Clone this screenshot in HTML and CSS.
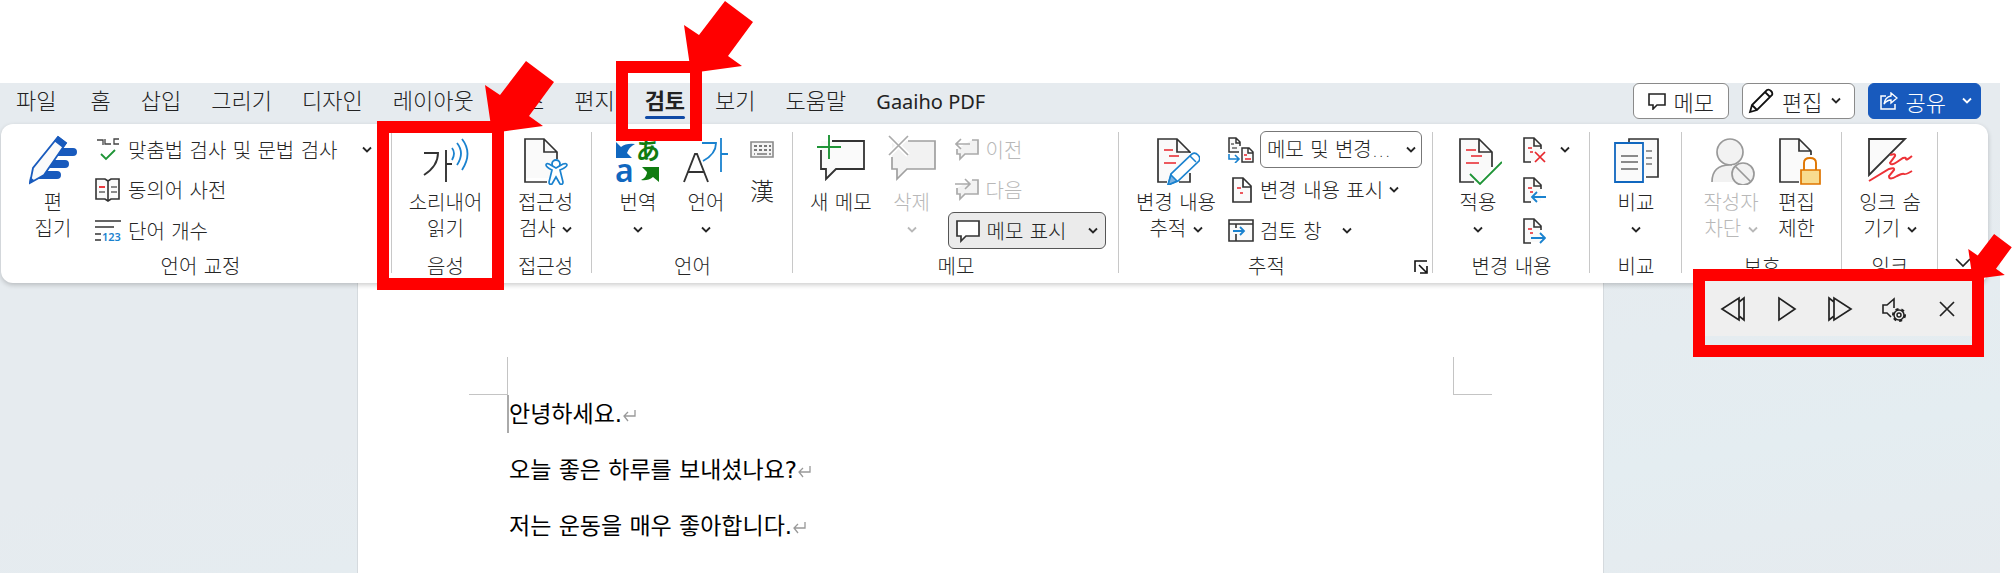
FILE: index.html
```html
<!DOCTYPE html>
<html lang="ko">
<head>
    <meta charset="UTF-8">
    <meta name="viewport" content="width=device-width, initial-scale=1.0">
    <title>검토 - 소리내어 읽기</title>
    <link rel="stylesheet" href="styles.css">
</head>
<body>

<svg class="sprite" aria-hidden="true">
    <symbol id="chevron" viewBox="0 0 10 8">
        <path d="M1 1.5 5 5.5 9 1.5" fill="none" stroke="currentColor" stroke-width="1.8"/>
    </symbol>
    <symbol id="arrow" viewBox="0 0 69 73">
        <path d="M41 0 69 21 44 55 58 65 7 72 0 24 15 34Z" fill="#f00"/>
    </symbol>
    <symbol id="page-small" viewBox="0 0 24 28">
        <path d="M2 2h10l7 7v16H2z" fill="#fafafa"/>
        <path d="M9 26H2V2h10l7 7v4M12 2v8h7" fill="none" stroke="#333" stroke-width="1.6"/>
        <path d="M6 12h4M8 16h3" stroke="#e8252b" stroke-width="1.6"/>
    </symbol>
</svg>

<div class="app">
    <header class="topbar">
        <nav class="tabs">
            <a class="tab tab-file" href="#">파일</a>
            <a class="tab" href="#">홈</a>
            <a class="tab" href="#">삽입</a>
            <a class="tab" href="#">그리기</a>
            <a class="tab" href="#">디자인</a>
            <a class="tab" href="#">레이아웃</a>
            <a class="tab" href="#">참조</a>
            <a class="tab" href="#">편지</a>
            <a class="tab active" href="#">검토
                <span class="mark mark-tab"><svg class="arrow"><use href="#arrow"/></svg></span>
            </a>
            <a class="tab" href="#">보기</a>
            <a class="tab" href="#">도움말</a>
            <a class="tab tab-latin" href="#">Gaaiho PDF</a>
        </nav>
        <div class="actions">
            <button class="action">
                <svg width="18" height="18" viewBox="0 0 18 18"><path d="M1 2h16v11H9l-4 4v-4H1z" fill="none" stroke="#222" stroke-width="1.6"/></svg>
                메모
            </button>
            <button class="action">
                <svg width="26" height="26" viewBox="0 0 26 26"><path d="M2 24 4 17 19 2q2-1 4 1t1 4L9 22zM4 17l5 5M17 4l5 5" fill="none" stroke="#111" stroke-width="1.8"/></svg>
                편집
                <svg class="chevron"><use href="#chevron"/></svg>
            </button>
            <button class="action share">
                <svg width="18" height="18" viewBox="0 0 18 18"><path d="M6 4H1v13h14v-5" fill="none" stroke="#fff" stroke-width="1.5"/><path d="M11 1l6 5-6 5V8Q7 8 4 12 5 5 11 4z" fill="none" stroke="#fff" stroke-width="1.4"/></svg>
                공유
                <svg class="chevron"><use href="#chevron"/></svg>
            </button>
        </div>
    </header>

    <section class="ribbon">
        <div class="group group-proof">
            <div class="tools">
                <button class="big">
                    <svg class="icon" viewBox="0 0 48 50">
                        <path d="M30 13h14a4 4 0 0 1 0 8H24zM23 25h13a4 4 0 0 1 0 8H17zM13 36h15a4 4 0 0 1 0 8H9z" fill="#185abd"/>
                        <path d="M29 2 37 8 15 40 1 48 4 33z" fill="#fafafa" stroke="#185abd" stroke-width="1.8"/>
                        <path d="M29 1 38 8 34 13 25 6zM1 42 5 45 0 49z" fill="#185abd"/>
                    </svg>
                    <span>편<br>집기</span>
                </button>
                <div class="rows">
                    <button class="small wide">
                        <svg width="26" height="24" viewBox="0 0 26 24"><path d="M2 2h6v5M10 1v5h6M24 1h-5v5h5" fill="none" stroke="#444" stroke-width="1.3"/><path d="M6 16l5 5 9-9" fill="none" stroke="#1e9436" stroke-width="1.8"/></svg>
                        맞춤법 검사 및 문법 검사
                        <svg class="chevron"><use href="#chevron"/></svg>
                    </button>
                    <button class="small">
                        <svg width="26" height="24" viewBox="0 0 26 24"><path d="M1 1h9l3 2 3-2h8v20h-8l-3 2-3-2H1zM13 3v19" fill="#fafafa" stroke="#333" stroke-width="1.6"/><path d="M4 14h6M16 9h6M16 14h6" stroke="#666" stroke-width="1.3"/><path d="M4 9h6" stroke="#e8252b" stroke-width="1.8"/></svg>
                        동의어 사전
                    </button>
                    <button class="small">
                        <svg class="lettered" width="26" height="24" viewBox="0 0 26 24"><path d="M0 2h26M0 8h19M0 15h6M0 21h6" stroke="#333" stroke-width="1.5"/><text class="count" x="7" y="22">123</text></svg>
                        단어 개수
                    </button>
                </div>
            </div>
            <div class="group-label">언어 교정</div>
        </div>

        <div class="group group-voice">
            <div class="tools centered">
                <button class="big">
                    <svg class="icon" viewBox="0 0 48 50"><path d="M3 18h14q0 13-14 22M25 15v32M25 29h6" fill="none" stroke="#333" stroke-width="1.9"/><path d="M31 13q4 5 0 12M36 8q8 10 0 22M41 4q11 14 0 31" fill="none" stroke="#1a82cf" stroke-width="1.8"/></svg>
                    <span>소리내어<br>읽기</span>
                </button>
            </div>
            <div class="group-label">음성</div>
            <span class="mark mark-voice"><svg class="arrow"><use href="#arrow"/></svg></span>
        </div>

        <div class="group">
            <div class="tools centered">
                <button class="big">
                    <svg class="icon" viewBox="0 0 48 50"><path d="M4 4h19l12 12v27H4z" fill="#fafafa"/><path d="M26 47H4V4h19l13 13v7M23 4v13h13" fill="none" stroke="#333" stroke-width="1.7"/><circle cx="35" cy="29" r="4" fill="#fff" stroke="#1a82cf" stroke-width="1.8"/><path d="M25 30q0-2 3-1l7 4 7-4q4-1 4 1t-7 5l3 12q0 3-3 2l-4-7-4 7q-3 1-3-2l3-12q-6-3-6-5z" fill="#fff" stroke="#1a82cf" stroke-width="1.7"/></svg>
                    <span>접근성<br>검사 <svg class="chevron"><use href="#chevron"/></svg></span>
                </button>
            </div>
            <div class="group-label">접근성</div>
        </div>

        <div class="group group-lang">
            <div class="tools">
                <button class="big">
                    <svg class="icon lettered" viewBox="0 0 48 50"><text class="glyph-a" x="1" y="47">a</text><text class="glyph-ja" x="22" y="24">あ</text><path d="M2 7l5 5q5-4 14-3-6 3-8 9l5 5H2z" fill="#1067bf"/><path d="M45 47l-6-5q-5 4-12 3 6-3 6-8l-5-5h17z" fill="#107c10"/></svg>
                    <span>번역<br><svg class="chevron"><use href="#chevron"/></svg></span>
                </button>
                <button class="big">
                    <svg class="icon" viewBox="0 0 48 50"><path d="M2 47 13 19h2l11 28M6 37h16" fill="none" stroke="#333" stroke-width="1.9"/><path d="M20 8h14q0 11-13 18M39 3v34M39 19h7" fill="none" stroke="#1a82cf" stroke-width="1.8"/></svg>
                    <span>언어<br><svg class="chevron"><use href="#chevron"/></svg></span>
                </button>
                <div class="rows">
                    <button class="small" aria-label="키보드">
                        <svg width="24" height="18" viewBox="0 0 24 18"><path d="M1 1h22v15H1z" fill="#f4f4f4" stroke="#8a8a8a" stroke-width="1.6"/><path d="M4 5h17M4 9h17" stroke="#777" stroke-width="2" stroke-dasharray="3 2"/><path d="M7 13h10M4 13h1M19 13h2" stroke="#777" stroke-width="1.5"/></svg>
                    </button>
                    <button class="small hanja">漢</button>
                </div>
            </div>
            <div class="group-label">언어</div>
        </div>

        <div class="group group-memo">
            <div class="tools">
                <button class="big">
                    <svg class="icon" viewBox="0 0 48 50"><path d="M4 6h43v28H19L9 44V34H4z" fill="#fafafa"/><path d="M15 6h32v28H19L9 44V34H4V15" fill="none" stroke="#333" stroke-width="1.8"/><path d="M0 12h24M12 0v24" stroke="#1e9436" stroke-width="1.9"/></svg>
                    <span>새 메모</span>
                </button>
                <button class="big" disabled>
                    <svg class="icon" viewBox="0 0 48 50"><path d="M4 6h43v28H19L9 44V34H4z" fill="#f2f2f2"/><path d="M20 6h27v28H19L9 44V34H4V22" fill="none" stroke="#a0a0a0" stroke-width="1.7"/><path d="M1 1l19 19M20 1 1 20" stroke="#fff" stroke-width="5"/><path d="M1 1l19 19M20 1 1 20" stroke="#aaa" stroke-width="1.7"/></svg>
                    <span>삭제<br><svg class="chevron"><use href="#chevron"/></svg></span>
                </button>
                <div class="rows">
                    <button class="small" disabled>
                        <svg width="24" height="24" viewBox="0 0 24 24"><path d="M17 2h6v14H10l-5 5v-5H2v-5" fill="#f2f2f2" stroke="#aaa" stroke-width="1.7"/><path d="M15 6H1M6 1 1 6l5 5" fill="none" stroke="#aaa" stroke-width="1.6"/></svg>
                        이전
                    </button>
                    <button class="small" disabled>
                        <svg width="24" height="24" viewBox="0 0 24 24"><path d="M17 2h6v14H10l-5 5v-5H2v-6" fill="#f2f2f2" stroke="#aaa" stroke-width="1.7"/><path d="M0 6h14M10 1l5 5-5 5" fill="none" stroke="#aaa" stroke-width="1.6"/></svg>
                        다음
                    </button>
                    <button class="small pressed">
                        <svg width="24" height="24" viewBox="0 0 24 24"><path d="M1 2h22v15H10l-5 5v-5H1z" fill="#fff" stroke="#333" stroke-width="1.7"/></svg>
                        메모 표시
                        <svg class="chevron"><use href="#chevron"/></svg>
                    </button>
                </div>
            </div>
            <div class="group-label">메모</div>
        </div>

        <div class="group group-track">
            <div class="tools">
                <button class="big">
                    <svg class="icon" viewBox="0 0 48 50"><path d="M6 4h19l12 13v30H6z" fill="#fafafa"/><path d="M15 47H6V4h19l13 13v1M25 4v13h13M38 38v9H27" fill="none" stroke="#333" stroke-width="1.7"/><path d="M12 15h9M17 21h10M12 28h12" stroke="#e8252b" stroke-width="1.7"/><path d="M16 50l3-11 21-20q3-2 6 1t1 6L26 46z" fill="#fff" stroke="#1a82cf" stroke-width="1.7"/><path d="M16 50l3-10 6 6zM38 21l6 6" fill="#7db4e3" stroke="#1a82cf" stroke-width="1.5"/></svg>
                    <span>변경 내용<br>추적 <svg class="chevron"><use href="#chevron"/></svg></span>
                </button>
                <div class="rows">
                    <div class="small">
                        <svg width="26" height="26" viewBox="0 0 26 26"><path d="M11 15H1V1h7l4 4v4M8 1v5h4M14 11h7l4 4v10H14zM20 11v5h5" fill="#fafafa" stroke="#333" stroke-width="1.5"/><path d="M3 7h3M4 11h5" stroke="#666" stroke-width="1.3"/><path d="M16 18h3M17 22h6" stroke="#e8252b" stroke-width="1.6"/><path d="M1 17v5h9M7 18l4 4-4 4" fill="none" stroke="#1a82cf" stroke-width="1.6"/></svg>
                        <span class="select-box">
                            <select aria-label="검토용 표시">
                                <option>메모 및 변경...</option>
                            </select>
                            <svg class="chevron"><use href="#chevron"/></svg>
                        </span>
                    </div>
                    <button class="small">
                        <svg width="26" height="26" viewBox="0 0 26 26"><path d="M5 1h10l8 8v16H5zM15 1v9h8" fill="#fafafa" stroke="#333" stroke-width="1.7"/><path d="M9 11h4M12 16h3" stroke="#e8252b" stroke-width="1.7"/></svg>
                        변경 내용 표시
                        <svg class="chevron"><use href="#chevron"/></svg>
                    </button>
                    <button class="small review-pane">
                        <svg width="26" height="24" viewBox="0 0 26 24"><path d="M1 1h24v21H1zM1 5h24M8 5v4M8 15v7" fill="#fafafa" stroke="#333" stroke-width="1.6"/><path d="M5 12h11M12 8l4 4-4 4" fill="none" stroke="#1a82cf" stroke-width="1.8"/></svg>
                        검토 창
                        <svg class="chevron"><use href="#chevron"/></svg>
                    </button>
                </div>
            </div>
            <div class="group-label with-launcher">
                <span>추적</span>
                <button class="launcher" aria-label="변경 내용 추적 옵션">
                    <svg width="14" height="14" viewBox="0 0 14 14"><path d="M1 12V1h12M5 5l7 7M13 6v7H6" fill="none" stroke="#111" stroke-width="1.6"/></svg>
                </button>
            </div>
        </div>

        <div class="group group-changes">
            <div class="tools">
                <button class="big">
                    <svg class="icon" viewBox="0 0 48 50"><path d="M6 4h19l12 12v17L25 47H6z" fill="#fafafa"/><path d="M20 47H6V4h19l13 13v15M25 4v13h13" fill="none" stroke="#333" stroke-width="1.7"/><path d="M12 15h10M17 21h11M12 28h13" stroke="#e8252b" stroke-width="1.7"/><path d="M16 39l10 10 22-22" fill="none" stroke="#1e9436" stroke-width="1.8"/></svg>
                    <span>적용<br><svg class="chevron"><use href="#chevron"/></svg></span>
                </button>
                <div class="rows">
                    <button class="small" aria-label="적용 안 함">
                        <svg width="24" height="28" viewBox="0 0 24 28"><use href="#page-small"/><path d="M13 16l10 10M23 16 13 26" stroke="#fafafa" stroke-width="4"/><path d="M13 16l10 10M23 16 13 26" stroke="#e8252b" stroke-width="1.7"/></svg>
                        <svg class="chevron"><use href="#chevron"/></svg>
                    </button>
                    <button class="small" aria-label="이전 변경 내용">
                        <svg width="24" height="28" viewBox="0 0 24 28"><use href="#page-small"/><path d="M24 21H11M15 16l-5 5 5 5" fill="none" stroke="#1a82cf" stroke-width="1.8"/></svg>
                    </button>
                    <button class="small" aria-label="다음 변경 내용">
                        <svg width="24" height="28" viewBox="0 0 24 28"><use href="#page-small"/><path d="M9 21h13M18 16l5 5-5 5" fill="none" stroke="#1a82cf" stroke-width="1.8"/></svg>
                    </button>
                </div>
            </div>
            <div class="group-label">변경 내용</div>
        </div>

        <div class="group">
            <div class="tools centered">
                <button class="big">
                    <svg class="icon" viewBox="0 0 48 50"><path d="M17 7V4h29v38H34" fill="#fafafa" stroke="#333" stroke-width="1.7"/><path d="M34 16h6M34 23h6M34 29h6" stroke="#777" stroke-width="1.5"/><path d="M3 8h28v39H3z" fill="#fafafa" stroke="#1067bf" stroke-width="1.8"/><path d="M9 21h17M9 27h17M9 34h17" stroke="#666" stroke-width="1.6"/></svg>
                    <span>비교<br><svg class="chevron"><use href="#chevron"/></svg></span>
                </button>
            </div>
            <div class="group-label">비교</div>
        </div>

        <div class="group group-protect">
            <div class="tools centered">
                <button class="big" disabled>
                    <svg class="icon" viewBox="0 0 48 50"><circle cx="23" cy="17" r="13" fill="#f2f2f2" stroke="#999" stroke-width="1.7"/><path d="M5 47q0-17 18-17 6 0 9 4l-4 13" fill="#f2f2f2"/><path d="M5 47q0-17 18-17h2" fill="none" stroke="#999" stroke-width="1.7"/><circle cx="36" cy="39" r="11" fill="#f2f2f2" stroke="#999" stroke-width="1.7"/><path d="M28 31l16 16" stroke="#999" stroke-width="1.7"/></svg>
                    <span>작성자<br>차단 <svg class="chevron"><use href="#chevron"/></svg></span>
                </button>
                <button class="big">
                    <svg class="icon" viewBox="0 0 48 50"><path d="M7 4h19l12 12v30H7z" fill="#fafafa"/><path d="M26 47H7V4h19l12 12v4M26 4v12h12" fill="none" stroke="#333" stroke-width="1.7"/><path d="M31 36v-8q0-5 6-5t6 5v8" fill="#fff" stroke="#df7500" stroke-width="1.9"/><path d="M28 35h19v14H28z" fill="#f8dc8f" stroke="#df7500" stroke-width="1.7"/></svg>
                    <span>편집<br>제한</span>
                </button>
            </div>
            <div class="group-label">보호</div>
        </div>

        <div class="group">
            <div class="tools centered">
                <button class="big">
                    <svg class="icon" viewBox="0 0 48 50"><path d="M3 4h36L3 40z" fill="#fafafa" stroke="#333" stroke-width="1.8"/><path d="M24 20q6-2 5 1l-5 7q1 3 7-1l6-4q3-1 3 1t6-3M3 46l20-12q6-2 5 1l-5 6q0 5 8 0 6-3 7-2t8-3" fill="none" stroke="#ed3237" stroke-width="2"/></svg>
                    <span>잉크 숨<br>기기 <svg class="chevron"><use href="#chevron"/></svg></span>
                </button>
            </div>
            <div class="group-label">잉크</div>
        </div>

        <div class="group group-end">
            <button class="collapse" aria-label="리본 메뉴 축소">
                <svg width="16" height="10" viewBox="0 0 16 10"><path d="M1 1l7 7 7-7" fill="none" stroke="#222" stroke-width="1.7"/></svg>
            </button>
        </div>
    </section>

    <main class="workspace">
        <article class="page">
            <div class="corners">
                <span class="corner corner-left"></span>
                <span class="corner corner-right"></span>
            </div>
            <div class="text">
                <p class="current">안녕하세요.<svg class="return" viewBox="0 0 14 12"><path d="M13 0v6H2M6 2 2 6l4 5" fill="none" stroke="#999" stroke-width="1.3"/></svg></p>
                <p>오늘 좋은 하루를 보내셨나요?<svg class="return" viewBox="0 0 14 12"><path d="M13 0v6H2M6 2 2 6l4 5" fill="none" stroke="#999" stroke-width="1.3"/></svg></p>
                <p>저는 운동을 매우 좋아합니다.<svg class="return" viewBox="0 0 14 12"><path d="M13 0v6H2M6 2 2 6l4 5" fill="none" stroke="#999" stroke-width="1.3"/></svg></p>
            </div>
        </article>

        <div class="mark mark-player">
            <div class="player">
                <button aria-label="이전"><svg width="26" height="26" viewBox="0 0 26 26"><path d="M19 2v22L2 13zM19 6l5-4v22l-5-4" fill="none" stroke="#222" stroke-width="1.7"/></svg></button>
                <button aria-label="재생"><svg width="26" height="26" viewBox="0 0 26 26"><path d="M5 2v22l16-11z" fill="none" stroke="#222" stroke-width="1.7"/></svg></button>
                <button aria-label="다음"><svg width="26" height="26" viewBox="0 0 26 26"><path d="M7 2v22l17-11zM7 6 2 2v22l5-4" fill="none" stroke="#222" stroke-width="1.7"/></svg></button>
                <button aria-label="설정"><svg width="26" height="26" viewBox="0 0 26 26"><path d="M13 12V3l-7 6H2v8h4l4 4" fill="none" stroke="#222" stroke-width="1.6"/><circle cx="18" cy="19" r="5" fill="#efefef" stroke="#222" stroke-width="1.5"/><circle cx="18" cy="19" r="6" fill="none" stroke="#222" stroke-width="2" stroke-dasharray="3 3"/><circle cx="18" cy="19" r="2" fill="none" stroke="#222" stroke-width="1.5"/></svg></button>
                <button aria-label="닫기"><svg width="26" height="26" viewBox="0 0 26 26"><path d="M6 6l14 14M20 6 6 20" fill="none" stroke="#222" stroke-width="1.7"/></svg></button>
            </div>
            <svg class="arrow arrow-small"><use href="#arrow"/></svg>
        </div>
    </main>
</div>

</body>
</html>
```

FILE: styles.css
```css
* {
    box-sizing: border-box;
}
body {
    margin: 0;
    min-height: 100vh;
    display: flex;
    flex-direction: column;
    background-color: #fff;
    color: #262626;
    font-family: "DejaVu Sans", "Noto Sans CJK KR", sans-serif;
    font-size: 20px;
    font-weight: 300;
    overflow: hidden;
}
button,
select {
    padding: 0;
    border: none;
    background: none;
    color: inherit;
    font: inherit;
    white-space: nowrap;
    cursor: pointer;
}
svg {
    flex: none;
}
.sprite {
    position: absolute;
    width: 0;
    height: 0;
}
.lettered {
    overflow: visible;
}
.chevron {
    width: 10px;
    height: 8px;
}
.app {
    flex: 1;
    display: flex;
    flex-direction: column;
    margin: 83px 12px 0 0;
    background: linear-gradient(170deg, #e6ebef 0%, #e6ebef 50%, #e4edf1 80%, #e6ebef 100%);
}

/* tabs */
.topbar {
    display: flex;
    justify-content: space-between;
    padding: 0 19px 5px 16px;
}
.tabs {
    display: flex;
    gap: 30px;
}
.tab {
    position: relative;
    height: 36px;
    color: #222;
    font-size: 22px;
    line-height: 38px;
    text-decoration: none;
    white-space: nowrap;
}
.tab-file {
    margin-right: 4px;
}
.tab-latin {
    font-family: "Noto Sans", sans-serif;
    font-size: 20px;
    font-weight: 400;
}
.tab.active {
    font-weight: 700;
}
.tab.active::after {
    content: "";
    position: absolute;
    left: 0;
    right: 0;
    bottom: 0;
    height: 3px;
    border-radius: 2px;
    background-color: #0f4aa6;
}
.actions {
    display: flex;
    gap: 13px;
}
.action {
    display: flex;
    align-items: center;
    gap: 8px;
    height: 36px;
    padding: 0 14px;
    border: 1px solid #8a8a8a;
    border-radius: 6px;
    background-color: #fff;
    font-size: 22px;
}
.action:nth-child(2) {
    padding: 0 13px 0 5px;
}
.share {
    padding: 0 8px 0 11px;
    border-color: #185abd;
    background-color: #185abd;
    color: #fff;
}
.share .chevron {
    margin-left: 8px;
}

/* ribbon */
.ribbon {
    display: grid;
    grid-template-columns: 391fr 107fr 93fr 201fr 326fr 314fr 157fr 92fr 160fr 96fr 50fr;
    margin: 0 12px 0 1px;
    padding: 6px 0 3px;
    border-radius: 12px;
    background-color: #fff;
    box-shadow: 0 2px 5px rgba(0, 0, 0, 0.2);
    z-index: 1;
}
.group {
    position: relative;
    display: flex;
    flex-direction: column;
    min-width: 0;
}
.group::after {
    content: "";
    position: absolute;
    top: 2px;
    right: 0;
    bottom: 7px;
    width: 1px;
    background-color: #c8c8c8;
}
.group-end::after {
    display: none;
}
.tools {
    display: flex;
    height: 123px;
}
.centered {
    justify-content: center;
}
.group-label {
    height: 27px;
    line-height: 28px;
    text-align: center;
}
.group-proof .group-label {
    padding-left: 8px;
}
.big {
    display: flex;
    flex-direction: column;
    align-items: center;
    gap: 5px;
    padding-top: 5px;
    line-height: 26px;
}
.icon {
    width: 48px;
    height: 50px;
}
.big .chevron {
    vertical-align: 2px;
}
.big:disabled,
.small:disabled {
    color: #b8b8b8;
}
.rows {
    display: grid;
    grid-template-rows: 39px 41px 41px;
    justify-items: start;
    align-items: center;
}
.small {
    display: flex;
    align-items: center;
    gap: 7px;
    height: 37px;
}
.group-proof .tools {
    padding: 0 20px 0 28px;
    gap: 18px;
}
.group-proof .rows {
    flex: 1;
    justify-items: stretch;
}
.wide .chevron {
    margin-left: auto;
}
.group-lang .tools {
    padding-left: 22px;
    gap: 20px;
}
.hanja {
    font-size: 24px;
}
.group-memo .tools {
    padding-left: 17px;
}
.group-memo .big + .big {
    margin-left: 16px;
}
.group-memo .rows {
    margin-left: 12px;
}
.group-memo .small {
    padding: 0 7px;
}
.group-memo .pressed {
    border: 1px solid #555;
    border-radius: 6px;
    background-color: #ebebeb;
}
.pressed .chevron {
    margin-left: 14px;
}
.group-track .tools {
    padding-left: 17px;
    gap: 12px;
}
.group-track .small {
    gap: 6px;
}
.select-box {
    display: grid;
    align-items: center;
}
.select-box select,
.select-box .chevron {
    grid-area: 1 / 1;
}
.select-box select {
    appearance: none;
    width: 162px;
    height: 37px;
    padding: 0 24px 0 6px;
    border: 1px solid #777;
    border-radius: 6px;
    background-color: #fff;
}
.select-box .chevron {
    justify-self: end;
    margin-right: 6px;
    pointer-events: none;
}
.review-pane .chevron {
    margin-left: 14px;
}
.with-launcher {
    display: flex;
    align-items: center;
    padding-right: 5px;
}
.with-launcher span {
    flex: 1;
}
.launcher {
    display: flex;
}
.group-changes .tools {
    padding-left: 21px;
    gap: 20px;
}
.group-changes .small {
    gap: 14px;
}
.group-protect .tools {
    gap: 14px;
}
.collapse {
    margin: auto auto 12px;
    display: flex;
}

/* document */
.workspace {
    flex: 1;
    position: relative;
    display: grid;
    grid-template-columns: 357fr 1247fr 396fr;
}
.page {
    grid-column: 2;
    padding: 74px 111px 0;
    border: 1px solid #d5dade;
    border-width: 0 1px;
    background-color: #fff;
}
.corners {
    display: flex;
    justify-content: space-between;
}
.corner {
    width: 39px;
    height: 38px;
    border-bottom: 1px solid #c4c4c4;
}
.corner-left {
    border-right: 1px solid #c4c4c4;
}
.corner-right {
    border-left: 1px solid #c4c4c4;
}
.text {
    display: grid;
    gap: 18px;
    padding-left: 38px;
    color: #000;
    font-size: 23px;
    font-weight: 400;
    line-height: 38px;
}
.text p {
    margin: 0;
    height: 38px;
    border-left: 2px solid transparent;
}
.text .current {
    border-left-color: #aaa;
}
.return {
    width: 14px;
    height: 12px;
}

/* small lettering inside icons */
.count {
    fill: #1a82cf;
    font: 600 11px "Noto Sans", sans-serif;
}
.glyph-a {
    fill: #1067bf;
    font: 600 32px "Noto Sans", sans-serif;
}
.glyph-ja {
    fill: #107c10;
    font: 700 24px "Noto Sans CJK JP", sans-serif;
}

/* red callouts */
.mark {
    position: absolute;
    border: 12px solid #f00;
    z-index: 2;
}
.arrow {
    position: absolute;
    width: 69px;
    height: 73px;
}
.mark-tab {
    top: -22px;
    left: -29px;
    width: 86px;
    height: 80px;
}
.mark-tab .arrow {
    top: -72px;
    left: 56px;
}
.mark-voice {
    top: -9px;
    right: -5px;
    bottom: -10px;
    left: -15px;
}
.mark-voice .arrow {
    top: -72px;
    right: -62px;
}
.mark-player {
    top: -14px;
    right: 16px;
    width: 291px;
    height: 88px;
}
.player {
    display: flex;
    align-items: center;
    justify-content: space-between;
    height: 55px;
    padding: 0 12px 0 15px;
    background-color: #efefef;
}
.player button {
    display: flex;
}
.arrow-small {
    top: -47px;
    right: -40px;
    width: 44px;
    height: 46px;
}
```
